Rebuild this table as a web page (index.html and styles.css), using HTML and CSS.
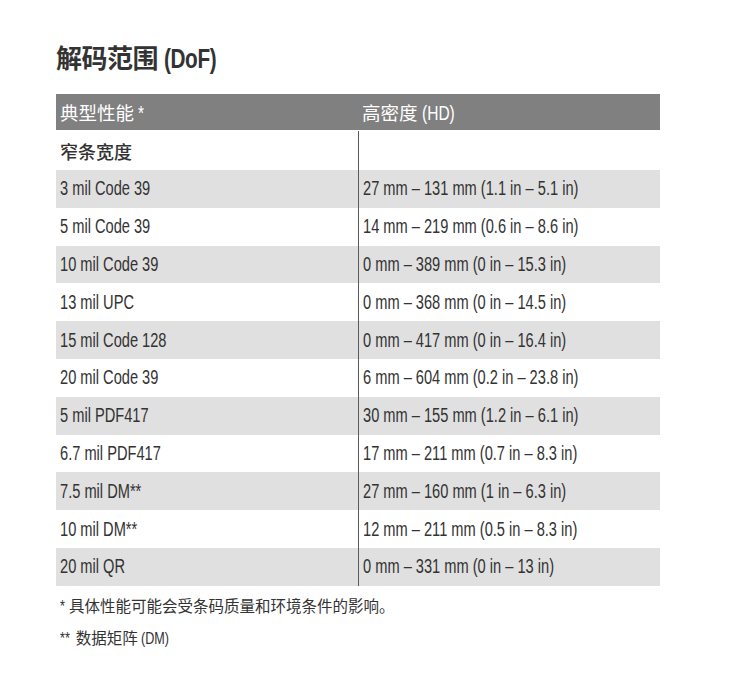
FILE: index.html
```html
<!DOCTYPE html>
<html lang="zh">
<head>
<meta charset="utf-8">
<link rel="stylesheet" href="styles.css">
</head>
<body>
<div class="page">
  <h1 class="title">解码范围 <span class="lat">(DoF)</span></h1>
  <div class="table">
    <div class="row head"><div class="c1">典型性能 <span class="lat">*</span></div><div class="c2">高密度 <span class="lat">(HD)</span></div></div>
    <div class="row sub"><div class="c1">窄条宽度</div><div class="c2"></div></div>
    <div class="row alt"><div class="c1"><span class="t">3 mil Code 39</span></div><div class="c2"><span class="t">27 mm – 131 mm (1.1 in – 5.1 in)</span></div></div>
    <div class="row"><div class="c1"><span class="t">5 mil Code 39</span></div><div class="c2"><span class="t">14 mm – 219 mm (0.6 in – 8.6 in)</span></div></div>
    <div class="row alt"><div class="c1"><span class="t">10 mil Code 39</span></div><div class="c2"><span class="t">0 mm – 389 mm (0 in – 15.3 in)</span></div></div>
    <div class="row"><div class="c1"><span class="t">13 mil UPC</span></div><div class="c2"><span class="t">0 mm – 368 mm (0 in – 14.5 in)</span></div></div>
    <div class="row alt"><div class="c1"><span class="t">15 mil Code 128</span></div><div class="c2"><span class="t">0 mm – 417 mm (0 in – 16.4 in)</span></div></div>
    <div class="row"><div class="c1"><span class="t">20 mil Code 39</span></div><div class="c2"><span class="t">6 mm – 604 mm (0.2 in – 23.8 in)</span></div></div>
    <div class="row alt"><div class="c1"><span class="t">5 mil PDF417</span></div><div class="c2"><span class="t">30 mm – 155 mm (1.2 in – 6.1 in)</span></div></div>
    <div class="row"><div class="c1"><span class="t">6.7 mil PDF417</span></div><div class="c2"><span class="t">17 mm – 211 mm (0.7 in – 8.3 in)</span></div></div>
    <div class="row alt"><div class="c1"><span class="t">7.5 mil DM**</span></div><div class="c2"><span class="t">27 mm – 160 mm (1 in – 6.3 in)</span></div></div>
    <div class="row"><div class="c1"><span class="t">10 mil DM**</span></div><div class="c2"><span class="t">12 mm – 211 mm (0.5 in – 8.3 in)</span></div></div>
    <div class="row alt"><div class="c1"><span class="t">20 mil QR</span></div><div class="c2"><span class="t">0 mm – 331 mm (0 in – 13 in)</span></div></div>
  </div>
  <p class="note"><span class="lat">*</span> 具体性能可能会受条码质量和环境条件的影响。</p>
  <p class="note"><span class="lat">**</span> 数据矩阵 <span class="lat">(DM)</span></p>
</div>
</body>
</html>
```
FILE: styles.css
```css
body {
  margin: 0;
  background: #fff;
  font-family: "Liberation Sans", "Noto Sans CJK SC", sans-serif;
  color: #333;
}
.page {
  padding: 38px 0 0 56px;
  width: 604px;
}
.lat {
  display: inline-block;
  font-family: "Liberation Sans", sans-serif;
  line-height: 1;
  transform: scaleX(0.74);
  transform-origin: left center;
  white-space: nowrap;
}
.title {
  margin: 0 0 18px 0;
  font-family: "Noto Sans CJK SC", sans-serif;
  font-size: 26px;
  font-weight: 700;
  line-height: 38px;
  color: #333;
  letter-spacing: -0.5px;
}
.title .lat {
  font-size: 28px;
  transform: scaleX(0.74);
  margin-left: 1px;
}
.table {
  display: flex;
  flex-direction: column;
}
.row {
  display: grid;
  grid-template-columns: 302px 1fr;
  height: 37.8px;
  font-size: 19.5px;
  color: #333;
}
.row .c1, .row .c2 {
  padding-left: 4px;
  display: flex;
  align-items: center;
  white-space: nowrap;
}
.row .c2 { border-left: 1px solid #5a5a5a; }
.t {
  display: inline-block;
  transform: scaleX(0.75);
  transform-origin: left center;
}
.row.alt { background: #e0e0e0; }
.row.head {
  background: #808080;
  color: #fff;
  height: 37px;
  box-sizing: border-box;
  font-family: "Noto Sans CJK SC", sans-serif;
  font-size: 18.5px;
  border-bottom: 1px solid #fff;
}
.row.head .lat { font-size: 21px; margin-left: 4px; }
.row.head .c2 { border-left: none; }
.row.sub {
  height: 39px;
  font-size: 18px;
  font-family: "Noto Sans CJK SC", sans-serif;
  font-weight: 500;
}
.note {
  margin: 7px 0 0 4px;
  font-family: "Noto Sans CJK SC", sans-serif;
  font-size: 15.5px;
  line-height: 24px;
  color: #333;
}
.note .lat { font-size: 17px; }
.note .lat:first-child { margin-right: -1px; }
.note + .note { margin-top: 8px; }
```
